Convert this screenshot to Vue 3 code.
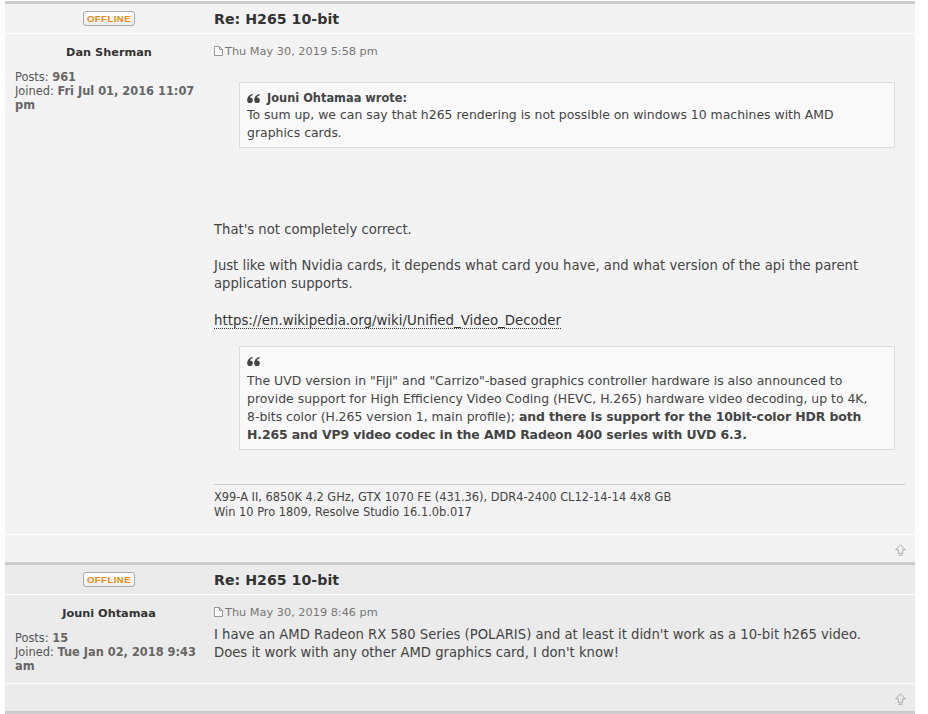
<script setup>
const posts = [
  { name: 'Dan Sherman', posts: '961', joined: 'Fri Jul 01, 2016 11:07 pm', date: 'Thu May 30, 2019 5:58 pm', alt: false, long: true },
  { name: 'Jouni Ohtamaa', posts: '15', joined: 'Tue Jan 02, 2018 9:43 am', date: 'Thu May 30, 2019 8:46 pm', alt: true, long: false }
]
</script>

<template>
  <div class="page">
    <article v-for="p in posts" :key="p.name" class="post" :class="{ alt: p.alt }">
      <header class="row head">
        <div class="side"><span class="badge">OFFLINE</span></div>
        <h2 class="title">Re: H265 10-bit</h2>
      </header>
      <div class="row body" :class="{ tall: p.long }">
        <aside class="side info">
          <div class="name">{{ p.name }}</div>
          <div class="stats">
            <div>Posts: <b>{{ p.posts }}</b></div>
            <div>Joined: <b>{{ p.joined }}</b></div>
          </div>
        </aside>
        <div class="main">
          <div class="date"><svg class="doc" width="9" height="10" viewBox="0 0 9 10"><path d="M.5.5h5l3 3v6h-8zM5.5.5v3h3" fill="#fff" stroke="#999"/></svg>{{ p.date }}</div>
          <div v-if="p.long" class="content">
            <blockquote class="quote first">
              <div class="cite"><svg class="qm" width="13" height="9" viewBox="0 0 13 9"><path d="M.2 6.2C.2 3 2.4.6 5.6 0v1.2C4 1.8 3.2 2.6 3 3.4a2.8 2.8 0 1 1-2.8 2.8zM7.2 6.2C7.2 3 9.4.6 12.6 0v1.2C11 1.8 10.2 2.6 10 3.4a2.8 2.8 0 1 1-2.8 2.8z" fill="#444"/></svg>Jouni Ohtamaa wrote:</div>
              To sum up, we can say that h265 rendering is not possible on windows 10 machines with AMD graphics cards.
            </blockquote>
            <p>That's not completely correct.</p>
            <p class="before-link">Just like with Nvidia cards, it depends what card you have, and what version of the api the parent application supports.</p>
            <p class="link-p"><a class="link">https://en.wikipedia.org/wiki/Unified_Video_Decoder</a></p>
            <blockquote class="quote">
              <div class="cite empty"><svg class="qm" width="13" height="9" viewBox="0 0 13 9"><path d="M.2 6.2C.2 3 2.4.6 5.6 0v1.2C4 1.8 3.2 2.6 3 3.4a2.8 2.8 0 1 1-2.8 2.8zM7.2 6.2C7.2 3 9.4.6 12.6 0v1.2C11 1.8 10.2 2.6 10 3.4a2.8 2.8 0 1 1-2.8 2.8z" fill="#444"/></svg></div>
              The UVD version in "Fiji" and "Carrizo"-based graphics controller hardware is also announced to provide support for High Efficiency Video Coding (HEVC, H.265) hardware video decoding, up to 4K, <span class="nb">8-bits</span> color (H.265 version 1, main profile); <b>and there is support for the 10bit-color HDR both H.265 and VP9 video codec in the AMD Radeon 400 series with UVD 6.3.</b>
            </blockquote>
            <div class="sig">X99-A II, 6850K 4.2 GHz, GTX 1070 FE (431.36), DDR4-2400 CL12-14-14 4x8 GB<br>Win 10 Pro 1809, Resolve Studio 16.1.0b.017</div>
          </div>
          <div v-else class="content short">
            I have an AMD Radeon RX 580 Series (POLARIS) and at least it didn't work as a 10-bit h265 video.<br>Does it work with any other AMD graphics card, I don't know!
          </div>
        </div>
      </div>
      <footer class="foot">
        <svg width="11" height="12" viewBox="0 0 11 12"><path d="M5.5.7 10.3 5.8H7.7v3.5H3.3V5.8H.7zM3.3 11.2h4.4" fill="none" stroke="#aaa"/></svg>
      </footer>
    </article>
  </div>
</template>

<style scoped>
.page {
  width: 928px;
  height: 714px;
  overflow: hidden;
  padding: 1px 13px 0 5px;
  box-sizing: border-box;
  font-family: "DejaVu Sans", Verdana, sans-serif;
  font-size: 13.2px;
  color: #444;
}
.post {
  border-top: 3px solid #ccc;
  background: #f3f3f3;
}
.post.alt { background: #ebebeb; border-bottom: 3px solid #ccc; }
.row { display: flex; }
.side { width: 204px; box-sizing: border-box; padding: 0 6px 0 10px; flex: none; }
.head {
  height: 29px;
  align-items: center;
  border-bottom: 1px solid #fff;
}
.head .side { display: flex; justify-content: center; }
.badge {
  width: 50px;
  height: 13px;
  border: 1px solid #aaa;
  border-radius: 3px;
  background: linear-gradient(#fff, #eee);
  color: #e98a14;
  font-family: "Liberation Sans", Arial, sans-serif;
  font-size: 9.5px;
  font-weight: 700;
  line-height: 13px;
  text-align: center;
  letter-spacing: .5px;
}
.title {
  margin: 0;
  padding: 1px 0 0 5px;
  font-size: 14.2px;
  font-weight: 700;
  color: #333;
}
.body { border-bottom: 1px solid #fff; height: 88px; }
.body.tall { height: 500px; }
.info { padding-top: 12px; font-size: 11.4px; line-height: 14px; color: #555; }
.name {
  font-size: 11.3px;
  font-weight: 700;
  color: #333;
  text-align: center;
  padding-bottom: 10px;
}
.stats { width: 186px; }
.stats b { color: #666; }
.main { flex: 1; padding: 11px 10px 0 5px; }
.date { font-size: 11.3px; line-height: 14px; color: #777; }
.doc { vertical-align: -1px; margin-right: 2px; }
.content { line-height: 18px; }
.content.short { padding-top: 6px; }
p { margin: 0 0 18px; }
.before-link { margin-bottom: 19px; }
.link-p { margin-bottom: 16px; }
.quote {
  margin: 0 10px 0 25px;
  padding: 7px 7px 5px;
  background: #f9f9f9;
  border: 1px solid #ddd;
  font-size: 12.45px;
}
.quote.first { margin-top: 23px; margin-bottom: 73px; padding-top: 8px; }
.quote b { letter-spacing: -.1px; }
.nb { white-space: nowrap; }
.cite { font-weight: 700; font-size: 11.4px; line-height: 15px; }
.cite.empty { height: 18px; }
.qm { margin-right: 7px; vertical-align: -1px; }
.link { color: #333; border-bottom: 1px dotted #333; font-size: 13.35px; }
.sig {
  margin-top: 34px;
  padding-top: 5px;
  border-top: 1px solid #ccc;
  font-size: 11.4px;
  line-height: 15px;
}
.foot {
  height: 27px;
  display: flex;
  justify-content: flex-end;
  align-items: center;
  padding-right: 9px;
}
.foot svg { transform: translateY(1px); }
</style>
